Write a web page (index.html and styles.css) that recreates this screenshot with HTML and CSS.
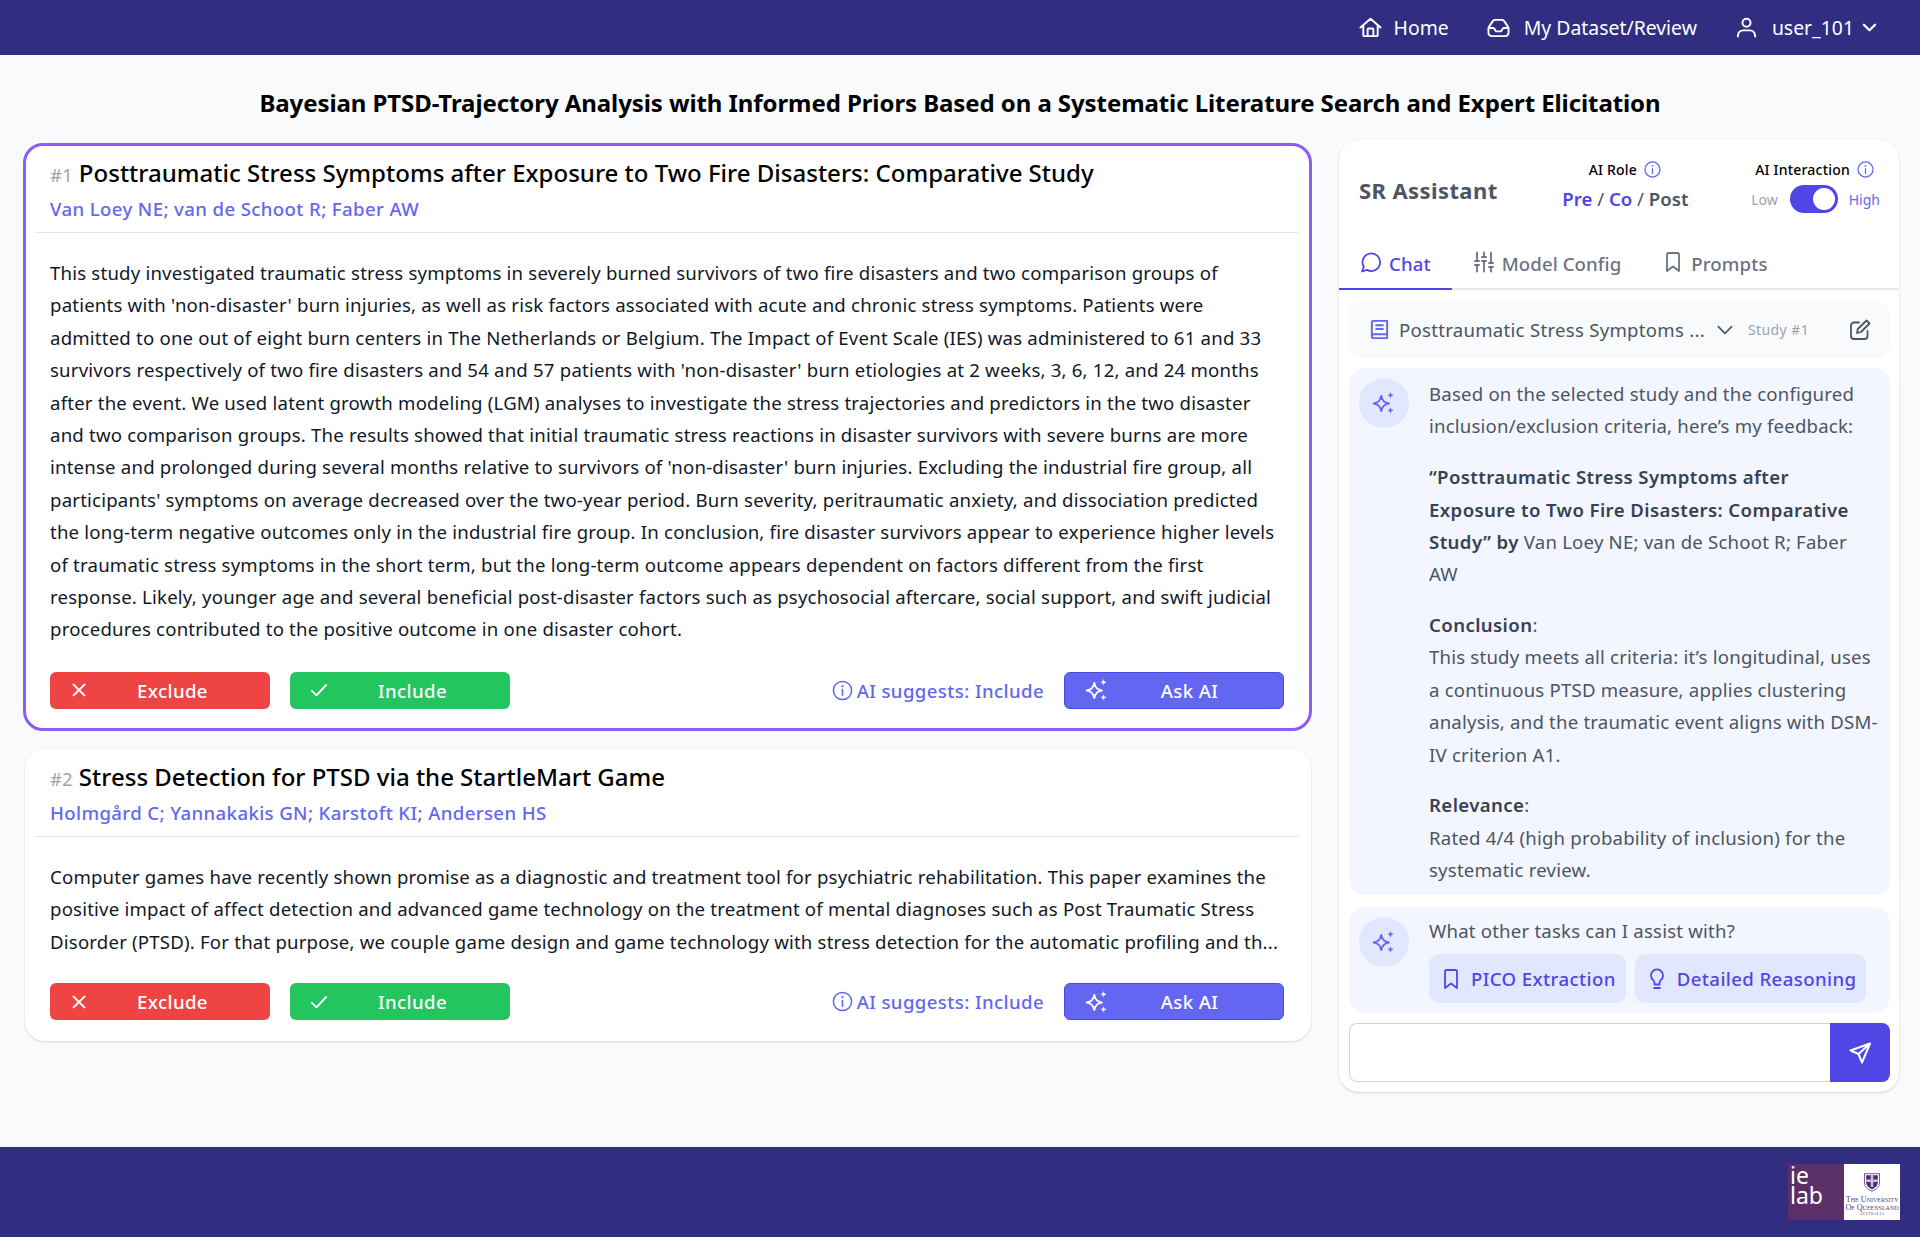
FILE: index.html
```html
<!DOCTYPE html>
<html lang="en">
<head>
<meta charset="utf-8">
<title>SR Assistant</title>
<link rel="stylesheet" href="styles.css">
</head>
<body>
<svg class="sprite" width="0" height="0" aria-hidden="true">
  <symbol id="spark" viewBox="0 0 24 24"><path d="M9.500 5.500c.9 4.400 2.600 6.100 7 7-4.400.9-6.100 2.600-7 7-.9-4.400-2.600-6.100-7-7 4.400-.9 6.100-2.600 7-7z" fill="none" stroke="currentColor" stroke-width="1.800" stroke-linejoin="round"/><path d="M18 2.500c.3 1.500.8 2 2.300 2.300-1.500.3-2 .8-2.300 2.300-.3-1.500-.8-2-2.300-2.300 1.500-.3 2-.8 2.300-2.300zM18 16.500c.3 1.500.8 2 2.300 2.300-1.500.3-2 .8-2.300 2.300-.3-1.500-.8-2-2.300-2.300 1.500-.3 2-.8 2.300-2.300z" fill="currentColor" stroke="currentColor" stroke-width=".6" stroke-linejoin="round"/></symbol>
  <symbol id="info" viewBox="0 0 24 24"><g fill="none" stroke="currentColor" stroke-width="1.600" stroke-linecap="round"><circle cx="12" cy="12" r="9.500"/><path d="M12 11v6"/><path d="M12 7.400v.1" stroke-width="2.200"/></g></symbol>
  <symbol id="bookmark" viewBox="0 0 24 24"><path d="M6 4.500A1.500 1.500 0 0 1 7.500 3h9A1.500 1.500 0 0 1 18 4.500V21l-6-4.500L6 21z" fill="none" stroke="currentColor" stroke-width="1.800" stroke-linejoin="round"/></symbol>
</svg>

<header class="topbar">
  <a class="nav-link nav-home"><svg class="nav-icon" viewBox="0 0 24 24"><path d="M1.500 12L12 2.800 22.500 12M4.500 9.500V20a1 1 0 0 0 1 1h13a1 1 0 0 0 1-1V9.500M9 21v-7a1 1 0 0 1 1-1h4a1 1 0 0 1 1 1v7"/></svg>Home</a>
  <a class="nav-link"><svg class="nav-icon" viewBox="0 0 24 24"><path d="M1.500 13v4.500A3.500 3.500 0 0 0 5 21h14a3.500 3.500 0 0 0 3.500-3.500V13a3 3 0 0 0-.7-1.900l-4-6A3 3 0 0 0 15.500 4h-7a3 3 0 0 0-2.300 1.100l-4 6A3 3 0 0 0 1.500 13zM2 12.500h5l2.500 3.500h5l2.500-3.500h5"/></svg>My Dataset/Review</a>
  <a class="nav-link"><svg class="nav-icon" viewBox="0 0 24 24"><circle cx="12" cy="7" r="4.200"/><path d="M3 21.500v-1a5.500 5.500 0 0 1 5.500-5.500h7a5.500 5.500 0 0 1 5.500 5.500v1"/></svg>user_101<svg class="nav-caret" viewBox="0 0 24 24"><path d="M5 8.500l7 7 7-7"/></svg></a>
</header>

<main class="page">
  <h1 class="page-title">Bayesian PTSD-Trajectory Analysis with Informed Priors Based on a Systematic Literature Search and Expert Elicitation</h1>
  <div class="workspace">
    <section class="studies">
      <article class="card card-active">
        <h2 class="card-title"><span class="card-num">#1</span> Posttraumatic Stress Symptoms after Exposure to Two Fire Disasters: Comparative Study</h2>
        <p class="card-authors">Van Loey NE; van de Schoot R; Faber AW</p>
        <p class="card-abstract">This study investigated traumatic stress symptoms in severely burned survivors of two fire disasters and two comparison groups of<br>patients with 'non-disaster' burn injuries, as well as risk factors associated with acute and chronic stress symptoms. Patients were<br>admitted to one out of eight burn centers in The Netherlands or Belgium. The Impact of Event Scale (IES) was administered to 61 and 33<br>survivors respectively of two fire disasters and 54 and 57 patients with 'non-disaster' burn etiologies at 2 weeks, 3, 6, 12, and 24 months<br>after the event. We used latent growth modeling (LGM) analyses to investigate the stress trajectories and predictors in the two disaster<br>and two comparison groups. The results showed that initial traumatic stress reactions in disaster survivors with severe burns are more<br>intense and prolonged during several months relative to survivors of 'non-disaster' burn injuries. Excluding the industrial fire group, all<br>participants' symptoms on average decreased over the two-year period. Burn severity, peritraumatic anxiety, and dissociation predicted<br>the long-term negative outcomes only in the industrial fire group. In conclusion, fire disaster survivors appear to experience higher levels<br>of traumatic stress symptoms in the short term, but the long-term outcome appears dependent on factors different from the first<br>response. Likely, younger age and several beneficial post-disaster factors such as psychosocial aftercare, social support, and swift judicial<br>procedures contributed to the positive outcome in one disaster cohort.</p>
        <div class="card-actions">
          <button class="btn btn-exclude"><svg class="btn-icon" viewBox="0 0 24 24"><path d="M5.500 5.500l13 13M18.500 5.500l-13 13"/></svg><span>Exclude</span></button>
          <button class="btn btn-include"><svg class="btn-icon" viewBox="0 0 24 24"><path d="M3.500 13l5.500 5.500L20.500 6"/></svg><span>Include</span></button>
          <span class="suggest"><svg class="suggest-icon"><use href="#info"/></svg>AI suggests: Include</span>
          <button class="btn btn-ask"><svg class="ask-icon"><use href="#spark"/></svg><span>Ask AI</span></button>
        </div>
      </article>
      <article class="card card-plain">
        <h2 class="card-title"><span class="card-num">#2</span> Stress Detection for PTSD via the StartleMart Game</h2>
        <p class="card-authors">Holmgård C; Yannakakis GN; Karstoft KI; Andersen HS</p>
        <p class="card-abstract">Computer games have recently shown promise as a diagnostic and treatment tool for psychiatric rehabilitation. This paper examines the<br>positive impact of affect detection and advanced game technology on the treatment of mental diagnoses such as Post Traumatic Stress<br>Disorder (PTSD). For that purpose, we couple game design and game technology with stress detection for the automatic profiling and th...</p>
        <div class="card-actions">
          <button class="btn btn-exclude"><svg class="btn-icon" viewBox="0 0 24 24"><path d="M5.500 5.500l13 13M18.500 5.500l-13 13"/></svg><span>Exclude</span></button>
          <button class="btn btn-include"><svg class="btn-icon" viewBox="0 0 24 24"><path d="M3.500 13l5.500 5.500L20.500 6"/></svg><span>Include</span></button>
          <span class="suggest"><svg class="suggest-icon"><use href="#info"/></svg>AI suggests: Include</span>
          <button class="btn btn-ask"><svg class="ask-icon"><use href="#spark"/></svg><span>Ask AI</span></button>
        </div>
      </article>
    </section>

    <aside class="panel">
      <div class="panel-head">
        <div class="panel-name">SR Assistant</div>
        <div class="role">
          <div class="ctl-label">AI Role <svg class="ctl-info"><use href="#info"/></svg></div>
          <div class="role-opts"><b>Pre</b> / <b>Co</b> / <span>Post</span></div>
        </div>
        <div class="interact">
          <div class="ctl-label">AI Interaction <svg class="ctl-info"><use href="#info"/></svg></div>
          <div class="toggle-row"><span class="t-low">Low</span><span class="toggle"><i></i></span><span class="t-high">High</span></div>
        </div>
      </div>
      <nav class="tabs">
        <a class="tab tab-active"><svg class="tab-icon" viewBox="0 0 24 24"><path d="M3 21.500l1.800-4.700A8.800 8.800 0 1 1 8 19.900z"/></svg>Chat</a>
        <a class="tab"><svg class="tab-icon" viewBox="0 0 24 24"><path d="M5 2.500v8.500M5 15v6.500M3 11h4M3 15h4M12 2.500V7M12 11v10.500M10 7h4M10 11h4M19 2.500V13M19 17v4.500M17 13h4M17 17h4"/></svg>Model Config</a>
        <a class="tab"><svg class="tab-icon"><use href="#bookmark"/></svg>Prompts</a>
      </nav>
      <div class="study-select">
        <svg class="doc-icon" viewBox="0 0 24 24"><path d="M4 19V4.500A1.500 1.500 0 0 1 5.500 3H20v18H6a2 2 0 0 1-2-2zM4 19a2 2 0 0 1 2-2h14M8.500 7.500h7M8.500 11.500h7"/></svg>
        <span class="study-name">Posttraumatic Stress Symptoms ...</span>
        <svg class="select-caret" viewBox="0 0 24 24"><path d="M4 8l8 8 8-8"/></svg>
        <span class="study-num">Study #1</span>
        <svg class="edit-icon" viewBox="0 0 24 24"><path d="M11 4.500H6a3 3 0 0 0-3 3V18a3 3 0 0 0 3 3h10.500a3 3 0 0 0 3-3v-5M9 15l.8-4L18.500 2.500l3 3L13 14z"/></svg>
      </div>
      <div class="bubble bubble-main">
        <span class="avatar"><svg class="avatar-icon"><use href="#spark"/></svg></span>
        <div class="bubble-body">
          <p>Based on the selected study and the configured<br>inclusion/exclusion criteria, here’s my feedback:</p>
          <p><b>“Posttraumatic Stress Symptoms after<br>Exposure to Two Fire Disasters: Comparative<br>Study” by</b> Van Loey NE; van de Schoot R; Faber<br>AW</p>
          <p><b>Conclusion</b>:<br>This study meets all criteria: it’s longitudinal, uses<br>a continuous PTSD measure, applies clustering<br>analysis, and the traumatic event aligns with DSM-<br>IV criterion A1.</p>
          <p><b>Relevance</b>:<br>Rated 4/4 (high probability of inclusion) for the<br>systematic review.</p>
        </div>
      </div>
      <div class="bubble bubble-tasks">
        <span class="avatar"><svg class="avatar-icon"><use href="#spark"/></svg></span>
        <div class="bubble-body tasks-body">
          <p class="tasks-q">What other tasks can I assist with?</p>
          <div class="chips">
            <a class="chip"><svg class="chip-icon"><use href="#bookmark"/></svg>PICO Extraction</a>
            <a class="chip"><svg class="chip-icon" viewBox="0 0 24 24"><path d="M9 21h6M9.500 17.500h5v-1.800c0-1 .6-1.800 1.300-2.600a6 6 0 1 0-7.600 0c.7.800 1.300 1.600 1.300 2.600z" fill="none" stroke="currentColor" stroke-width="1.800" stroke-linejoin="round" stroke-linecap="round"/></svg>Detailed Reasoning</a>
          </div>
        </div>
      </div>
      <div class="composer">
        <div class="composer-input"></div>
        <button class="composer-send"><svg class="send-icon" viewBox="0 0 24 24"><path d="M22 2.500L2.500 9.500l8 3.500 3.500 8.500zM10.500 13L22 2.500"/></svg></button>
      </div>
    </aside>
  </div>
</main>

<footer class="footer">
  <div class="logo-ie">ie<br>lab</div>
  <div class="logo-uq">
    <svg class="crest" viewBox="0 0 24 24"><path d="M3 2h18v11c0 5-4 8-9 10-5-2-9-5-9-10z" fill="#fff" stroke="#5b3a80" stroke-width="1"/><path d="M5 4h14v9c0 3.500-3 6-7 8-4-2-7-4.500-7-8z" fill="#4b2a78"/><path d="M10.500 4h3v5h5.500v3h-5.500v6h-3v-6H5V9h5.500z" fill="#cdbfe0"/></svg>
    <div class="uq-name">The University<br>Of Queensland</div>
    <div class="uq-country">AUSTRALIA</div>
  </div>
</footer>
</body>
</html>
```
FILE: styles.css
```css
* { box-sizing: border-box; }
html, body { margin: 0; padding: 0; }
body {
  min-height: 1237px;
  display: flex;
  flex-direction: column;
  background: #f9fafb;
  color: #000;
  font-family: "Noto Sans", "Open Sans", sans-serif;
  font-size: 18.600px;
}
p, h1, h2 { margin: 0; }
button { font: inherit; border: 0; padding: 0; }
.sprite { position: absolute; }

/* top bar */
.topbar {
  height: 55px;
  background: #312e81;
  display: flex;
  justify-content: flex-end;
  align-items: center;
  padding-right: 41px;
  gap: 38px;
  color: #fff;
}
.nav-link { display: flex; align-items: center; gap: 14px; font-size: 19.400px; }
.nav-home { gap: 12px; }
.nav-icon { width: 23px; height: 23px; fill: none; stroke: #fff; stroke-width: 2; stroke-linecap: round; stroke-linejoin: round; }
.nav-caret { width: 19px; height: 19px; margin-left: -8px; fill: none; stroke: #fff; stroke-width: 3; stroke-linecap: round; stroke-linejoin: round; }

/* page */
.page { flex: 1; display: flex; flex-direction: column; }
.page-title { height: 85px; padding-top: 30px; text-align: center; font-size: 24px; line-height: 36px; font-weight: 700; letter-spacing: -.08px; }
.workspace { display: flex; align-items: flex-start; gap: 27px; padding: 0 21px 0 23px; }
.studies { width: 1289px; padding-top: 3px; display: flex; flex-direction: column; gap: 18px; }

/* study cards */
.card {
  background: #fff;
  border-radius: 20px;
  box-shadow: 0 1px 3px rgba(0, 0, 0, .1), 0 1px 2px rgba(0, 0, 0, .06);
}
.card-plain { margin: 0 1px 0 2px; padding: 10px 12px 21px 10px; }
.card-active { border: 3px solid #8b5cf6; box-shadow: none; padding: 9px 10px 19px 9px; }
.card-title, .card-abstract, .card-actions { padding-left: 15px; padding-right: 15px; }
.card-title { font-size: 24px; line-height: 36px; font-weight: 500; letter-spacing: .02px; word-spacing: -.1px; }
.card-num { font-size: 18.600px; font-weight: 400; color: #9ca3af; }
.card-authors { color: #6366f1; font-size: 18.600px; font-weight: 500; letter-spacing: .38px; line-height: 32px; padding: 0 0 7px 15px; border-bottom: 1px solid #e5e7eb; margin-bottom: 24px; }
.card-abstract { font-size: 18.600px; line-height: 32.400px; color: #111827; letter-spacing: .2px; white-space: nowrap; }
.card-actions { display: flex; align-items: center; margin-top: 26px; }
.card-plain .card-actions { margin-top: 25px; }

.btn {
  width: 220px;
  height: 37px;
  border-radius: 6px;
  color: #fff;
  font-size: 18.600px;
  font-weight: 500;
  letter-spacing: .4px;
  display: flex;
  align-items: center;
  padding: 0 19px;
}
.btn span { flex: 1; text-align: center; padding-left: 5px; }
.btn-exclude { background: #ef4444; margin-right: 20px; }
.btn-include { background: #22c55e; }
.btn-ask { background: #6366f1; border: 1px solid #4f46e5; }
.btn-icon { width: 20px; height: 20px; fill: none; stroke: #fff; stroke-width: 2.400; stroke-linecap: round; stroke-linejoin: round; }
.ask-icon { width: 26px; height: 26px; color: #fff; }
.suggest { margin-left: auto; margin-right: 20px; display: flex; align-items: center; gap: 3px; color: #6366f1; font-size: 18.600px; font-weight: 500; letter-spacing: .4px; }
.suggest-icon { width: 23px; height: 23px; }

/* assistant panel */
.panel {
  width: 560px;
  height: 952px;
  background: #fff;
  border-radius: 20px;
  box-shadow: 0 1px 3px rgba(0, 0, 0, .1), 0 1px 2px rgba(0, 0, 0, .06);
  display: flex;
  flex-direction: column;
  padding-bottom: 10px;
}
.panel-head { height: 107px; padding: 20px 19px 0 20px; display: flex; align-items: flex-start; justify-content: space-between; }
.panel-name { font-size: 22px; font-weight: 700; color: #4b5563; line-height: 60px; letter-spacing: .4px; }
.role { margin-left: 3px; text-align: center; }
.ctl-label { display: flex; align-items: center; justify-content: center; gap: 6px; font-size: 14px; font-weight: 500; letter-spacing: .2px; height: 20px; margin: -1px 0 1px; }
.ctl-info { width: 19px; height: 19px; color: #6366f1; }
.role-opts { font-size: 18.600px; line-height: 38px; color: #4b5563; }
.role-opts b { font-weight: 600; color: #4f46e5; }
.role-opts span { font-weight: 600; }
.toggle-row { display: flex; align-items: center; gap: 11px; height: 38px; font-size: 14px; }
.t-low { color: #9ca3af; margin: 0 1px 0 1px; }
.t-high { color: #6366f1; }
.toggle { width: 48px; height: 28px; border-radius: 14px; background: #4f46e5; display: flex; align-items: center; justify-content: flex-end; padding-right: 3px; }
.toggle i { width: 22px; height: 22px; border-radius: 50%; background: #fff; }

.tabs { height: 43px; display: flex; border-bottom: 2px solid #e5e7eb; }
.tab { display: flex; align-items: flex-start; gap: 6px; padding: 3px 20px 0; font-size: 18.600px; line-height: 28px; font-weight: 500; letter-spacing: .1px; color: #6b7280; height: 43px; border-bottom: 2px solid #e5e7eb; }
.tab-active { color: #4f46e5; border-bottom-color: #4f46e5; padding-right: 21px; }
.tab-icon { width: 24px; height: 24px; fill: none; stroke: currentColor; stroke-width: 1.800; stroke-linecap: round; stroke-linejoin: round; }

.study-select { margin: 11px 9px 10px 10px; height: 57px; border-radius: 14px; background: #f9fafb; display: flex; align-items: center; padding-left: 19px; }
.doc-icon { width: 23px; height: 23px; fill: none; stroke: #6366f1; stroke-width: 2; stroke-linejoin: round; stroke-linecap: round; }
.study-name { width: 308px; margin-left: 8px; white-space: nowrap; color: #4b5563; font-size: 18.600px; letter-spacing: .27px; }
.select-caret { width: 20px; height: 20px; margin-left: 8px; fill: none; stroke: #4b5563; stroke-width: 2; stroke-linecap: round; stroke-linejoin: round; }
.study-num { margin-left: 13px; font-size: 14px; letter-spacing: .4px; color: #9ca3af; }
.edit-icon { width: 24px; height: 24px; margin-left: 39px; fill: none; stroke: #4b5563; stroke-width: 1.800; stroke-linecap: round; stroke-linejoin: round; }

.bubble { margin: 0 9px 0 10px; background: #f3f6ff; border-radius: 16px; display: flex; padding: 10px; gap: 20px; }
.bubble-main { height: 527px; }
.bubble-tasks { margin-top: 12px; height: 106px; }
.avatar { flex: none; width: 50px; height: 50px; border-radius: 50%; background: #e0e7ff; display: flex; align-items: center; justify-content: center; }
.avatar-icon { width: 26px; height: 26px; color: #6366f1; }
.bubble-body { flex: 1; color: #4b5563; font-size: 18.600px; line-height: 32.400px; letter-spacing: .2px; white-space: nowrap; }
.bubble-body p { margin-bottom: 18.300px; }
.bubble-body b { font-weight: 600; color: #374151; letter-spacing: .4px; }
.tasks-body { margin-top: -2px; }
.bubble-body .tasks-q { margin: 0 0 7px; }
.chips { display: flex; gap: 9px; }
.chip { height: 49px; padding: 0 10px; border-radius: 10px; background: #e0e7ff; color: #4f46e5; font-weight: 500; letter-spacing: .4px; line-height: 24px; display: flex; align-items: center; gap: 8px; white-space: nowrap; }
.chip-icon { width: 24px; height: 24px; }

.composer { margin: 10px 9px 0 10px; height: 59px; display: flex; }
.composer-input { flex: 1; background: #fff; border: 1.500px solid #d1d5db; border-right: 0; border-radius: 8px 0 0 8px; }
.composer-send { width: 60px; background: #4f46e5; border-radius: 0 8px 8px 0; display: flex; align-items: center; justify-content: center; }
.send-icon { width: 24px; height: 24px; fill: none; stroke: #fff; stroke-width: 2; stroke-linecap: round; stroke-linejoin: round; }

/* footer */
.footer { height: 90px; background: #312e81; display: flex; justify-content: flex-end; align-items: flex-start; padding: 17px 20px 0 0; }
.logo-ie { width: 56px; height: 56px; background: #5b3068; color: #fff; font-size: 23px; line-height: 20px; padding: 1px 0 0 2px; }
.logo-uq { width: 56px; height: 56px; background: #fff; display: flex; flex-direction: column; align-items: center; color: #5b3a80; font-family: "Liberation Serif", serif; }
.crest { width: 20px; height: 22px; margin-top: 7px; }
.uq-name { font-size: 8.200px; line-height: 7.500px; text-align: center; font-variant: small-caps; margin-top: 3px; white-space: nowrap; }
.uq-country { font-size: 3.500px; line-height: 6px; letter-spacing: .6px; }
```
